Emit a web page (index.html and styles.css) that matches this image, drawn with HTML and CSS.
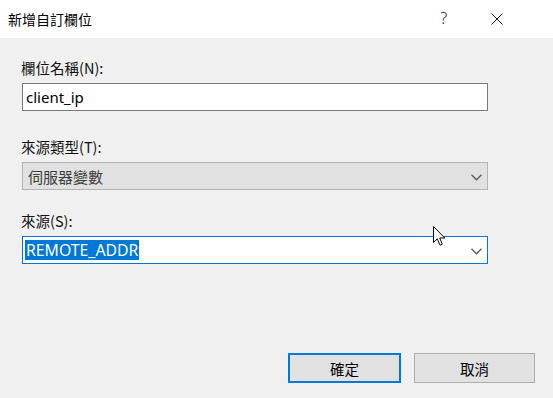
FILE: index.html
```html
<!DOCTYPE html>
<html lang="zh-Hant">
<head>
<meta charset="utf-8">
<link rel="stylesheet" href="styles.css">
</head>
<body>
<div class="dialog">
  <div class="titlebar">
    <div class="title">新增自訂欄位</div>
    <div class="help">?</div>
    <div class="close">
      <svg width="12" height="12" viewBox="0 0 12 12"><path d="M0.5 0.5 L11.5 11.5 M11.5 0.5 L0.5 11.5" stroke="#1a1a1a" stroke-width="1" fill="none"/></svg>
    </div>
  </div>
  <div class="content">
    <div class="group g1">
      <div class="label">欄位名稱(N):</div>
      <div class="field input"><span class="value">client_ip</span></div>
    </div>
    <div class="group g2">
      <div class="label">來源類型(T):</div>
      <div class="field select disabled">
        <span class="value">伺服器變數</span>
        <svg class="chev" width="11" height="7" viewBox="0 0 11 7"><path d="M0.5 0.8 L5.5 5.8 L10.5 0.8" stroke="#5a5a5a" stroke-width="1.3" fill="none"/></svg>
      </div>
    </div>
    <div class="group g3">
      <div class="label">來源(S):</div>
      <div class="field select focused">
        <span class="value sel">REMOTE_ADDR</span>
        <svg class="chev" width="11" height="7" viewBox="0 0 11 7"><path d="M0.5 0.8 L5.5 5.8 L10.5 0.8" stroke="#5a5a5a" stroke-width="1.3" fill="none"/></svg>
      </div>
    </div>
    <div class="footer">
      <div class="btn default">確定</div>
      <div class="btn">取消</div>
    </div>
  </div>
  <svg class="cursor" width="14" height="22" viewBox="0 0 14 22"><path d="M0.5 0.5 L0.5 16.5 L4.3 12.8 L7 19.2 L9.3 18.2 L6.7 12 L11.8 12 Z" fill="#ffffff" stroke="#000000" stroke-width="1" stroke-linejoin="miter"/></svg>
</div>
</body>
</html>
```

FILE: styles.css
```css
html, body {
  margin: 0;
  padding: 0;
}
body {
  width: 553px;
  height: 398px;
  overflow: hidden;
  font-family: "Noto Sans", "Noto Sans CJK TC", sans-serif;
  color: #000;
}
.dialog {
  position: relative;
  width: 553px;
  height: 398px;
  display: flex;
  flex-direction: column;
  background: #f0f0f0;
}
.titlebar {
  height: 38px;
  background: #ffffff;
  display: flex;
  align-items: center;
  flex: none;
}
.title {
  flex: 1;
  padding-left: 8px;
  font-family: "Noto Sans CJK TC", sans-serif;
  font-size: 14px;
  color: #000;
  margin-top: -1px;
}
.help {
  width: 20px;
  text-align: center;
  font-family: "Noto Sans", sans-serif;
  font-size: 16px;
  font-weight: 300;
  color: #1a1a1a;
  margin-right: 37px;
  margin-top: -2px;
}
.close {
  width: 12px;
  height: 12px;
  margin-right: 50px;
  display: flex;
  margin-top: -1px;
}
.content {
  flex: 1;
  display: flex;
  flex-direction: column;
  padding: 0 65px 15px 22px;
}
.group {
  display: flex;
  flex-direction: column;
}
.g1 { margin-top: 22px; }
.g2 { margin-top: 28px; }
.g3 { margin-top: 23px; }
.label {
  height: 16px;
  line-height: 16px;
  font-family: "Noto Sans CJK TC", sans-serif;
  font-size: 14.5px;
  color: #111;
  margin-bottom: 7px;
  margin-left: -1px;
}
.field {
  box-sizing: border-box;
  height: 28px;
  width: 466px;
  display: flex;
  align-items: center;
  position: relative;
}
.input {
  background: #ffffff;
  border: 1px solid #7a7a7a;
  padding-left: 3px;
}
.input .value {
  font-family: "Noto Sans", sans-serif;
  font-size: 15px;
  color: #000;
  margin-top: -1px;
}
.select.disabled {
  background: #e1e1e1;
  border: 1px solid #b4b4b4;
  padding-left: 5px;
}
.select.disabled .value {
  font-family: "Noto Sans CJK TC", sans-serif;
  font-size: 15px;
  color: #3c3c3c;
}
.select.focused {
  background: #ffffff;
  border: 1px solid #0078d7;
  padding-left: 2px;
}
.value.sel {
  background: #0078d7;
  color: #ffffff;
  font-family: "Noto Sans", sans-serif;
  font-size: 15.8px;
  line-height: 20px;
  padding: 0 1px;
}
.chev {
  position: absolute;
  right: 5px;
  top: 11px;
}
.footer {
  margin-top: auto;
  display: flex;
  justify-content: flex-end;
  gap: 13px;
  margin-right: -47px;
}
.btn {
  box-sizing: border-box;
  width: 121px;
  height: 30px;
  background: #e1e1e1;
  border: 1px solid #adadad;
  display: flex;
  align-items: center;
  justify-content: center;
  font-family: "Noto Sans CJK TC", sans-serif;
  font-size: 14.5px;
  color: #000;
}
.btn.default {
  width: 113px;
  border: 2px solid #0078d7;
}
.cursor {
  position: absolute;
  left: 433px;
  top: 226px;
}
```
